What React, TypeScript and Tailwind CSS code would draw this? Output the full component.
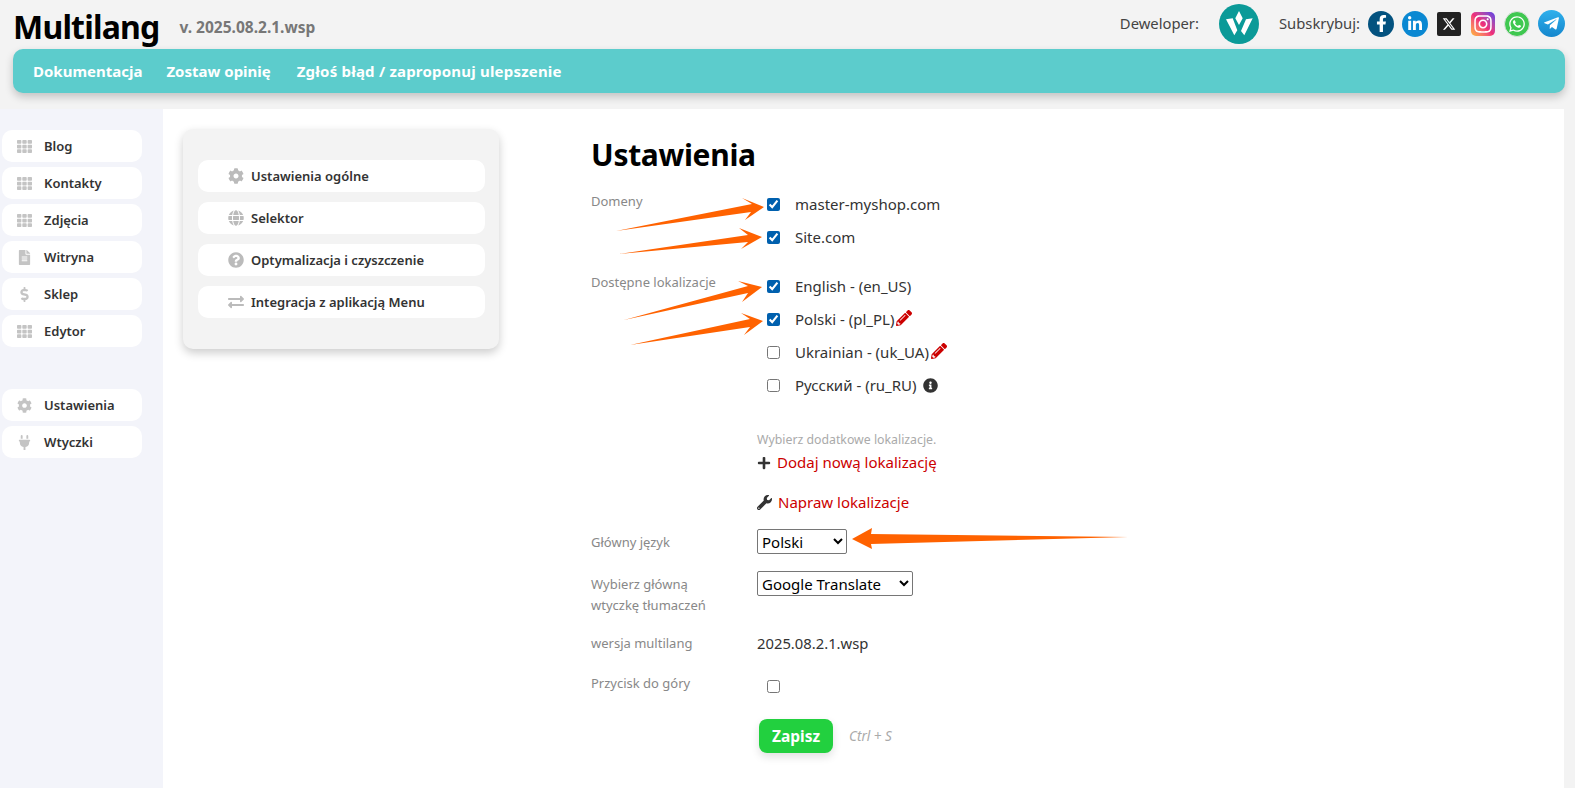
// Multilang settings page
import { FaTh, FaFileAlt, FaDollarSign, FaCog, FaPlug, FaGlobe, FaQuestionCircle, FaExchangeAlt, FaPencilAlt, FaInfoCircle, FaPlus, FaWrench, FaFacebookF, FaLinkedinIn, FaInstagram, FaWhatsapp, FaTelegramPlane } from 'react-icons/fa'
import { FaXTwitter } from 'react-icons/fa6'

const NAV = ['Dokumentacja', 'Zostaw opinię', 'Zgłoś błąd / zaproponuj ulepszenie']

const SIDE_TOP = [
  { label: 'Blog', icon: FaTh },
  { label: 'Kontakty', icon: FaTh },
  { label: 'Zdjęcia', icon: FaTh },
  { label: 'Witryna', icon: FaFileAlt },
  { label: 'Sklep', icon: FaDollarSign },
  { label: 'Edytor', icon: FaTh },
]
const SIDE_BOTTOM = [
  { label: 'Ustawienia', icon: FaCog },
  { label: 'Wtyczki', icon: FaPlug },
]
const SUB_MENU = [
  { label: 'Ustawienia ogólne', icon: FaCog },
  { label: 'Selektor', icon: FaGlobe },
  { label: 'Optymalizacja i czyszczenie', icon: FaQuestionCircle },
  { label: 'Integracja z aplikacją Menu', icon: FaExchangeAlt },
]

// arrows pasted on top of the screenshot
const ARROWS = [
  '616,231 752,204 742,198 764,207 745,220 751,212',
  '619,254 748,235 739,228 762,237 741,249 748,242',
  '624,320 748,286 738,281 762,287 742,302 748,293',
  '630,345 750,319 741,313 763,321 744,335 750,327',
  '1128,537 871,534 872,528 852,539 872,549 871,544',
]

function SideItem({ label, icon: Icon }: { label: string; icon: typeof FaTh }) {
  return (
    <div className="flex items-center h-8 rounded-[10px] bg-white text-[13px] font-semibold text-[#333]">
      <span className="w-[42px] flex justify-center pl-[2px] shrink-0"><Icon size={15} className="text-[#c4c4c4]" /></span>
      <span className="pt-[2px]">{label}</span>
    </div>
  )
}

function Check({ label, checked, children }: { label: string; checked?: boolean; children?: React.ReactNode }) {
  return (
    <div className="flex items-center h-[33px]">
      <input type="checkbox" defaultChecked={checked} className="ml-[10px] w-[13px] h-[13px] accent-[#0060ae]" />
      <span className="ml-[15px] text-[15px] text-[#333]">{label}</span>
      {children}
    </div>
  )
}

function Social({ className, children }: { className: string; children: React.ReactNode }) {
  return <span className={`flex items-center justify-center text-white ${className}`}>{children}</span>
}

export default function App() {
  return (
    <div className="relative h-screen overflow-hidden flex flex-col bg-[#f3f3f3] font-['Noto_Sans',sans-serif]">
      {/* Header */}
      <header className="h-[109px] shrink-0 px-[13px]">
        <div className="flex items-center h-[49px]">
          <span className="text-[32px] font-bold text-black leading-none tracking-[-0.8px] mt-1">Multilang</span>
          <span className="ml-5 text-[15.5px] font-bold text-[#777] mt-[6px]">v. 2025.08.2.1.wsp</span>
          <div className="ml-auto -mr-[3px] flex items-center -mt-[2px]">
            <span className="text-[14.8px] text-[#444]">Deweloper:</span>
            <svg viewBox="0 0 40 40" className="ml-5 w-10 h-10">
              <circle cx="20" cy="20" r="20" fill="#0b9a98" />
              <path d="M20 7l3.7 7.3L20 21l-3.7-6.7zM7 15.3l6.7-1 4.6 12-3 5zM33.700 14.300l-6.700 1-5 11.700 3.300 4.300z" fill="#fff" />
            </svg>
            <span className="ml-5 text-[14.8px] text-[#444]">Subskrybuj:</span>
            <div className="ml-2 flex items-center gap-[8px]">
              <Social className="w-[26px] h-[26px] rounded-full bg-[#03527f]"><FaFacebookF size={17} /></Social>
              <Social className="w-[26px] h-[26px] rounded-full bg-[#0a88d2]"><FaLinkedinIn size={16} /></Social>
              <Social className="ml-[1px] w-6 h-6 rounded-[2px] bg-[#222]"><FaXTwitter size={14} /></Social>
              <Social className="ml-[2px] w-6 h-6 rounded-[5px] bg-gradient-to-tr from-[#fdb52a] via-[#ee2a7b] to-[#5a35e8]"><FaInstagram size={20} /></Social>
              <Social className="ml-[1px] w-[26px] h-[26px] rounded-full bg-[#3fc850] border border-[#e0e0e0]"><FaWhatsapp size={18} /></Social>
              <Social className="w-[27px] h-[27px] rounded-full bg-gradient-to-b from-[#2fb0ec] to-[#1587cd]"><FaTelegramPlane size={17} /></Social>
            </div>
          </div>
        </div>
        <nav className="flex items-center gap-6 h-11 w-[1552px] px-5 rounded-[10px] bg-[#5ccccc] shadow-[0_4px_8px_rgba(0,0,0,0.2)] text-[15px] font-bold text-white">
          {NAV.map(n => <span key={n} className="last:tracking-[0.2px] last:ml-[2px]">{n}</span>)}
        </nav>
      </header>

      <div className="flex flex-1 min-h-0">
        {/* Sidebar */}
        <aside className="w-[163px] shrink-0 pt-[21px] pl-[2px] pr-[21px] bg-[#f3f4fa]">
          <div className="flex flex-col gap-[5px]">
            {SIDE_TOP.map(i => <SideItem key={i.label} {...i} />)}
          </div>
          <div className="flex flex-col gap-[5px] mt-[42px]">
            {SIDE_BOTTOM.map(i => <SideItem key={i.label} {...i} />)}
          </div>
        </aside>

        <main className="flex-1 bg-white flex items-start mr-[11px]">
          {/* Sub menu card */}
          <div className="ml-5 mt-5 w-[316px] h-[220px] rounded-[10px] bg-[#f3f3f3] shadow-[0_4px_10px_rgba(0,0,0,0.2)] pt-[31px] pl-[15px] pr-[14px] flex flex-col gap-[10px]">
            {SUB_MENU.map(({ label, icon: Icon }) => (
              <div key={label} className="flex items-center h-8 rounded-[10px] bg-white text-[13px] font-semibold text-[#333]">
                <span className="ml-[30px] w-[23px] shrink-0"><Icon size={16} className="text-[#bbb]" /></span>
                <span className="pt-[2px]">{label}</span>
              </div>
            ))}
          </div>

          {/* Settings form */}
          <div className="ml-[92px] mt-6">
            <h1 className="text-[30px] font-bold text-black leading-[44px] tracking-[-0.3px]">Ustawienia</h1>
            <div className="mt-[11px] grid grid-cols-[166px_1fr] text-[13px] text-[#888]">
              <div className="pt-[4px]">Domeny</div>
              <div>
                <Check label="master-myshop.com" checked />
                <Check label="Site.com" checked />
              </div>

              <div className="mt-[16px] pt-[3px]">Dostępne lokalizacje</div>
              <div className="mt-[16px]">
                <Check label="English - (en_US)" checked />
                <Check label="Polski - (pl_PL)" checked><FaPencilAlt size={16} className="ml-[2px] text-[#c00] -mt-1" /></Check>
                <Check label="Ukrainian - (uk_UA)"><FaPencilAlt size={16} className="ml-[2px] text-[#c00] -mt-1" /></Check>
                <Check label="Русский - (ru_RU)"><FaInfoCircle size={15} className="ml-[6px] text-[#333]" /></Check>
              </div>

              <div />
              <div className="mt-[29px]">
                <div className="text-[12.3px] text-[#aaa]">Wybierz dodatkowe lokalizacje.</div>
                <div className="mt-[2px] flex items-center text-[15px] text-[#c00]"><FaPlus size={14} className="mr-[6px] text-[#333]" />Dodaj nową lokalizację</div>
                <div className="mt-[17px] flex items-center text-[15px] text-[#c00]"><FaWrench size={15} className="mr-[6px] text-[#333]" />Napraw lokalizacje</div>
              </div>

              <div className="mt-[16px] pt-[4px]">Główny język</div>
              <div className="mt-[16px]">
                <select defaultValue="Polski" className="w-[90px] h-[25px] rounded-[2px] border border-[#767676] bg-white text-[15px] text-black">
                  <option>Polski</option>
                </select>
              </div>

              <div className="mt-[20px] leading-[21px]">Wybierz główną<br />wtyczkę tłumaczeń</div>
              <div className="mt-[17px]">
                <select defaultValue="Google Translate" className="w-[156px] h-[25px] rounded-[2px] border border-[#767676] bg-white text-[15px] text-black">
                  <option>Google Translate</option>
                </select>
              </div>

              <div className="mt-[18px]">wersja multilang</div>
              <div className="mt-[16px] text-[14.8px] text-[#333]">2025.08.2.1.wsp</div>

              <div className="mt-[19px]">Przycisk do góry</div>
              <div className="mt-[25px]"><input type="checkbox" className="ml-[10px] w-[13px] h-[13px] block" /></div>

              <div />
              <div className="mt-[26px] ml-[2px] flex items-center">
                <button className="w-[74px] h-[34px] rounded-[8px] bg-[#22d03f] text-[15.5px] font-bold text-white shadow-[0_4px_8px_rgba(0,0,0,0.12)]">Zapisz</button>
                <span className="ml-4 text-[13.500px] italic text-[#aaa]">Ctrl + S</span>
              </div>
            </div>
          </div>
        </main>
      </div>

      {/* Orange annotation arrows */}
      <svg viewBox="0 0 1575 788" className="absolute inset-0 w-full h-full pointer-events-none">
        {ARROWS.map(p => <polygon key={p} points={p} fill="#ff6200" />)}
      </svg>
    </div>
  )
}
